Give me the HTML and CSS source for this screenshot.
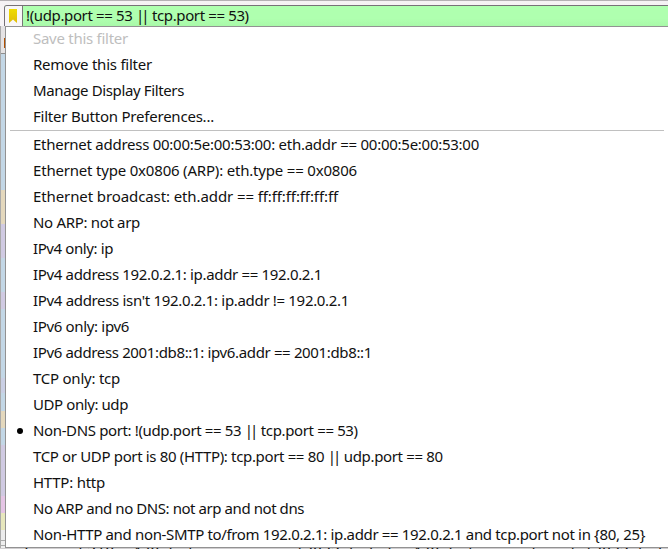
FILE: index.html
```
<!DOCTYPE html>
<html lang="en">
<head>
<meta charset="utf-8">
<title>Display filter menu</title>
<link rel="stylesheet" href="styles.css">
</head>
<body>
<div class="window">
  <header class="toolbar">
    <div class="filter">
      <div class="bookmark"><svg width="8" height="14" viewBox="0 0 8 14"><defs><linearGradient id="g" x2="0" y2="1"><stop stop-color="#efdc00"/><stop offset="1" stop-color="#e0bd08"/></linearGradient></defs><path fill="url(#g)" d="M0 0H8V14L4 10.5L0 14Z"/></svg></div>
      <div class="expression"><span data-width="222">!(udp.port == 53 <span class="or">||</span> tcp.port == 53)</span></div>
    </div>
  </header>
  <div class="body">
    <div class="packets"></div>
    <ul class="menu">
      <li class="disabled first"><span data-width="95">Save this filter</span></li>
      <li><span data-width="119">Remove this filter</span></li>
      <li><span data-width="151">Manage Display Filters</span></li>
      <li><span data-width="181">Filter Button Preferences...</span></li>
      <li class="separator"></li>
      <li><span data-width="446">Ethernet address 00:00:5e:00:53:00: eth.addr == 00:00:5e:00:53:00</span></li>
      <li><span data-width="324">Ethernet type 0x0806 (ARP): eth.type == 0x0806</span></li>
      <li><span data-width="305">Ethernet broadcast: eth.addr == ff:ff:ff:ff:ff:ff</span></li>
      <li><span data-width="107">No ARP: not arp</span></li>
      <li><span data-width="80">IPv4 only: ip</span></li>
      <li><span data-width="289">IPv4 address 192.0.2.1: ip.addr == 192.0.2.1</span></li>
      <li><span data-width="316">IPv4 address isn't 192.0.2.1: ip.addr != 192.0.2.1</span></li>
      <li><span data-width="96">IPv6 only: ipv6</span></li>
      <li><span data-width="339">IPv6 address 2001:db8::1: ipv6.addr == 2001:db8::1</span></li>
      <li><span data-width="87">TCP only: tcp</span></li>
      <li><span data-width="95">UDP only: udp</span></li>
      <li class="checked"><span data-width="324">Non-DNS port: !(udp.port == 53 <span class="or">||</span> tcp.port == 53)</span></li>
      <li><span data-width="409">TCP or UDP port is 80 (HTTP): tcp.port == 80 <span class="or">||</span> udp.port == 80</span></li>
      <li><span data-width="72">HTTP: http</span></li>
      <li><span data-width="271">No ARP and no DNS: not arp and not dns</span></li>
      <li class="last"><span data-width="612">Non-HTTP and non-SMTP to/from 192.0.2.1: ip.addr == 192.0.2.1 and tcp.port not in {80, 25}</span></li>
    </ul>
  </div>
  <footer class="details"><div class="frame">Frame 5218: 479 bytes on wire (3832 bits), 479 bytes captured (3832 bits)</div></footer>
</div>
<script src="fit.js"></script>
</body>
</html>
```
FILE: styles.css
```
* { box-sizing: border-box; }
body { margin: 0; overflow: hidden; font: 15px/26px "Noto Sans", sans-serif; color: #111; }
.window { width: 668px; height: 549px; overflow: hidden; background: #efedee; }
.toolbar { height: 26px; padding: 4px 0 0 4px; border-top: 1px solid #b5b1b4; background: linear-gradient(#f5f2f4, #f8f5f7); }
.filter { display: flex; width: 680px; height: 22px; border: 1px solid #777177; border-bottom: 0; border-radius: 3px 0 0 0; background: #afffaf; overflow: hidden; }
.bookmark { width: 18px; padding: 3px 0 0 4px; border-right: 1px solid #777; background: #f8f6f7; }
.bookmark svg { display: block; }
.expression { flex: 1; padding-left: 3px; line-height: 19px; background: linear-gradient(#afffaf 60%, #a8f8a8); }
.body { display: flex; height: 522px; }
.packets {
  flex: 0 0 5px; border-left: 1px solid #aaa;
  background: linear-gradient(#e5e3e4 0 27px, #8e8e8e 27px 28px, #c3d7e6 28px 164px, #e4d8bd 164px 198px, #d0cae2 198px 232px, #c3d7e6 232px 266px, #d0cae2 266px 283px, #c3d7e6 283px 352px, #cacfe4 352px 367px, #c3d7e6 367px 385px, #e4d8bd 385px 402px, #c3d7e6 402px 419px, #d0cae2 419px 470px, #e5c5e5 470px 487px, #e7e7bd 487px 504px, #ececec 504px 514px, #aaa 514px 515px, #eee 515px 519px, #aaa 519px 520px, #eee 520px);
}
.packets::before { content: ""; display: block; width: 1px; height: 10px; margin: 12px 0 0 3px; background: #b25000; }
.menu { flex: 1; margin: 0; padding: 0; list-style: none; background: #fff; border: 1px solid #929292; border-right: 0; }
.menu li { height: 26px; padding-left: 27px; line-height: 24px; white-space: nowrap; }
.menu .first { height: 25px; line-height: 23px; }
.menu .last { height: 25px; }
.menu .disabled { color: #bebebe; }
.menu .separator { height: 1px; margin: 0 4px 1px; background: #c0c0c0; }
.menu .checked { display: flex; padding-left: 11px; }
.checked::before { content: ""; width: 6px; height: 6px; margin: 10px 10px 0 0; border-radius: 50%; background: #000; }
.or { letter-spacing: -3px; margin-right: 2px; }
.details { height: 1px; padding-left: 24px; overflow: hidden; background: #d0ced0; }
.frame { margin-top: -3px; font: 15px/17px "DejaVu Sans Mono", monospace; white-space: nowrap; }
```
FILE: fit.js
```
// Tracks each label so that its advance width equals its data-width.
document.querySelectorAll("[data-width]").forEach(function (label) {
  var gap = label.dataset.width - label.getBoundingClientRect().width;
  label.style.letterSpacing = gap / label.textContent.length + "px";
});
```
